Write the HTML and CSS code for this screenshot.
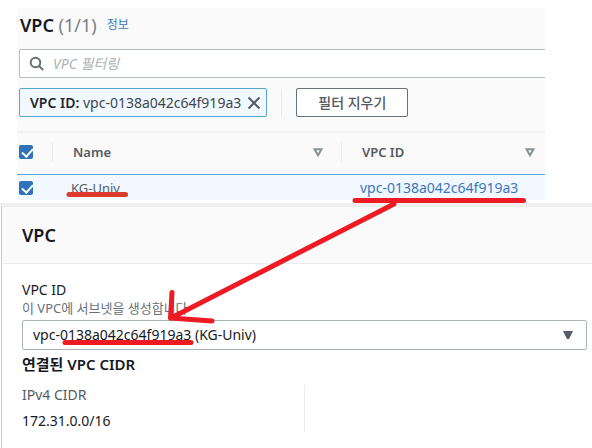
FILE: index.html
```html
<!DOCTYPE html>
<html lang="ko">
<head>
<meta charset="utf-8">
<title>VPC</title>
<meta name="viewport" content="width=device-width, initial-scale=1">
<link rel="stylesheet" href="styles.css">
</head>
<body>
<main class="page">
  <section class="list">
    <header class="list-head">
      <h1 class="title">VPC <span class="count">(1/1)</span></h1>
      <a class="info" href="#info">정보</a>
    </header>
    <div class="search">
      <svg class="search-icon" viewBox="0 0 16 16" aria-hidden="true"><circle cx="6.5" cy="6.5" r="4.8"/><path d="M10 10l4.2 4"/></svg>
      <input class="search-input" type="search" placeholder="VPC 필터링" aria-label="VPC 필터링">
    </div>
    <div class="filters">
      <div class="chip">
        <span><b>VPC ID:</b> vpc-0138a042c64f919a3</span>
        <button class="chip-close" type="button" aria-label="필터 제거"><svg viewBox="0 0 14 14"><path d="M1.500 1.500l11 11M12.500 1.500l-11 11"/></svg></button>
      </div>
      <span class="filter-divider"></span>
      <button class="clear" type="button">필터 지우기</button>
    </div>
    <table class="table">
      <colgroup><col class="col-check"><col class="col-name"><col></colgroup>
      <thead>
        <tr>
          <th><input class="check" type="checkbox" checked aria-label="모두 선택"></th>
          <th><div class="th">Name<svg class="sort" viewBox="0 0 10 9"><path d="M1.5 1.2h7L5 7.3z"/></svg></div></th>
          <th><div class="th th-last">VPC ID<svg class="sort" viewBox="0 0 10 9"><path d="M1.5 1.2h7L5 7.3z"/></svg></div></th>
        </tr>
      </thead>
      <tbody>
        <tr>
          <td><input class="check" type="checkbox" checked aria-label="KG-Univ 선택"></td>
          <td class="name">KG-Univ</td>
          <td class="vpc"><a href="#vpc">vpc-0138a042c64f919a3</a></td>
        </tr>
      </tbody>
    </table>
  </section>

  <section class="panel">
    <h2 class="panel-title">VPC</h2>
    <div class="panel-body">
      <label class="label" for="vpc-select">VPC ID</label>
      <p class="hint">이 VPC에 서브넷을 생성합니다</p>
      <div class="select-wrap">
        <select class="select" id="vpc-select"><option>vpc-0138a042c64f919a3 (KG-Univ)</option></select>
        <svg class="caret" viewBox="0 0 10 8" aria-hidden="true"><path d="M0 0h10L6 8H4z"/></svg>
      </div>
      <h3 class="subhead">연결된 VPC CIDR</h3>
      <div class="cidr">
        <dl class="pair"><dt>IPv4 CIDR</dt><dd>172.31.0.0/16</dd></dl>
      </div>
    </div>
  </section>

  <svg class="marks" width="592" height="448" viewBox="0 0 592 448" aria-hidden="true">
    <path class="mark-soft" d="M69 194.5H125.500"/>
    <path d="M355 200.500H523.500"/>
    <path d="M394 204L171 318"/>
    <path d="M172 292.500L170.500 318L212 321"/>
    <path d="M65 342.500H191"/>
  </svg>
</main>
</body>
</html>
```
FILE: styles.css
```css
* { box-sizing: border-box; }

body {
  margin: 0;
  background: #fff;
  color: #16191f;
  font: 14px/20px "Noto Sans", "Noto Sans CJK KR", sans-serif;
}

h1, h2, h3, p, dl, dd { margin: 0; }
a { color: #3c77bd; text-decoration: none; }
button, input, select { font: inherit; color: inherit; }
button { cursor: pointer; }

.page { position: relative; padding-top: 8px; }

.list { margin: 0 47px 3px 17px; background: #fafafa; }
.list-head {
  display: flex;
  align-items: center;
  gap: 10px;
  height: 41px;
  padding: 0 3px 8px;
}
.title { font-size: 18px; line-height: 24px; font-weight: 600; }
.count { color: #7c8085; font-weight: 400; }
.info { font-size: 12px; }

.search {
  display: flex;
  align-items: center;
  gap: 8px;
  height: 29px;
  margin-left: 2px;
  padding-left: 9px;
  background: #fff;
  border: 1px solid #b6bebe;
  border-right: 0;
  border-radius: 2px 0 0 2px;
}
.search-icon { width: 16px; height: 16px; fill: none; stroke: #687078; stroke-width: 2; }
.search-input { flex: 1; min-width: 0; padding: 0; border: 0; background: none; outline: 0; }
.search-input::placeholder { color: #aab3b7; font-style: italic; opacity: 1; }

.filters { display: flex; align-items: center; padding: 10px 2px 14px; }
.chip {
  display: flex;
  align-items: center;
  gap: 6px;
  height: 29px;
  padding: 0 5px 0 10px;
  background: #f1f8ff;
  border: 1px solid #55a5cf;
  border-radius: 2px;
  color: #40464e;
  white-space: nowrap;
}
.chip b { font-weight: 600; color: #24282e; }
.chip-close { display: flex; padding: 0; border: 0; background: none; }
.chip-close svg { width: 14px; height: 14px; fill: none; stroke: #545b64; stroke-width: 2; }
.filter-divider { width: 1px; height: 28px; margin: 0 14px; background: #eaeded; }
.clear {
  height: 29px;
  padding: 0 21px;
  background: #fff;
  border: 1px solid #687078;
  border-radius: 2px;
  color: #545b64;
  font-weight: 500;
}

.table { width: 100%; border-collapse: separate; border-spacing: 0; table-layout: fixed; }
.col-check { width: 35px; }
.col-name { width: 289px; }
.table th {
  height: 44px;
  padding: 0 0 3px;
  border-top: 2px solid #f0f1f1;
  border-bottom: 1px solid #55a5cf;
  text-align: left;
  color: #545b64;
  font-weight: 600;
}
.table th:first-child, .table td:first-child { padding-left: 2px; }
.th {
  display: flex;
  align-items: center;
  justify-content: space-between;
  padding: 0 18px 0 20px;
  border-left: 1px solid #eaeded;
  font-size: 13px;
}
.th-last { padding-right: 10px; }
.sort { width: 10px; height: 9px; fill: none; stroke: #879196; stroke-width: 2; }
.table td { height: 25px; padding: 0 0 0 19px; background: #f1f8ff; }
.table .name { color: #545b64; font-size: 13px; }
.check {
  appearance: none;
  display: block;
  width: 14px;
  height: 14px;
  margin: 0;
  border-radius: 2px;
  background: #2e73b8;
}
.check::before {
  content: "";
  display: block;
  width: 5px;
  height: 9px;
  margin: 0 0 0 5px;
  border: solid #fff;
  border-width: 0 2px 2px 0;
  transform: translateY(1px) rotate(42deg);
}

.panel { border-top: 3px solid #f0f0f0; }
.panel-title {
  margin-left: 1px;
  padding: 16px 20px;
  background: #fafafa;
  border: solid #eaeded;
  border-width: 1px 0;
  border-left: 1px solid #c5cdcd;
  font-size: 18px;
  line-height: 24px;
  font-weight: 600;
}
.panel-body {
  margin-left: 1px;
  padding: 16px 5px 16px 20px;
  border-left: 1px solid #c5cdcd;
}
.label { display: block; }
.hint { color: #687078; font-size: 13px; line-height: 16px; }
.select-wrap { position: relative; margin: 4px 0; }
.select {
  appearance: none;
  display: block;
  width: 100%;
  height: 30px;
  padding: 0 30px 0 10px;
  background: #fff;
  border: 1px solid #aab7b8;
  border-radius: 2px;
}
.caret { position: absolute; right: 14px; top: 11px; width: 10px; height: 8px; fill: #545b64; pointer-events: none; }
.subhead { font-size: 15px; line-height: 20px; font-weight: 600; }
.cidr { display: grid; grid-template-columns: 1fr 1fr; padding-top: 11px; }
.pair { height: 47px; border-right: 1px solid #eaeded; }
.pair dt { color: #545b64; }
.pair dd { padding-top: 6px; }

.marks {
  position: absolute;
  left: 0;
  top: 0;
  fill: none;
  stroke: #ed1c24;
  stroke-width: 5;
  stroke-linecap: round;
  stroke-linejoin: round;
  pointer-events: none;
}
.mark-soft { stroke: #db3a2c; }
```
